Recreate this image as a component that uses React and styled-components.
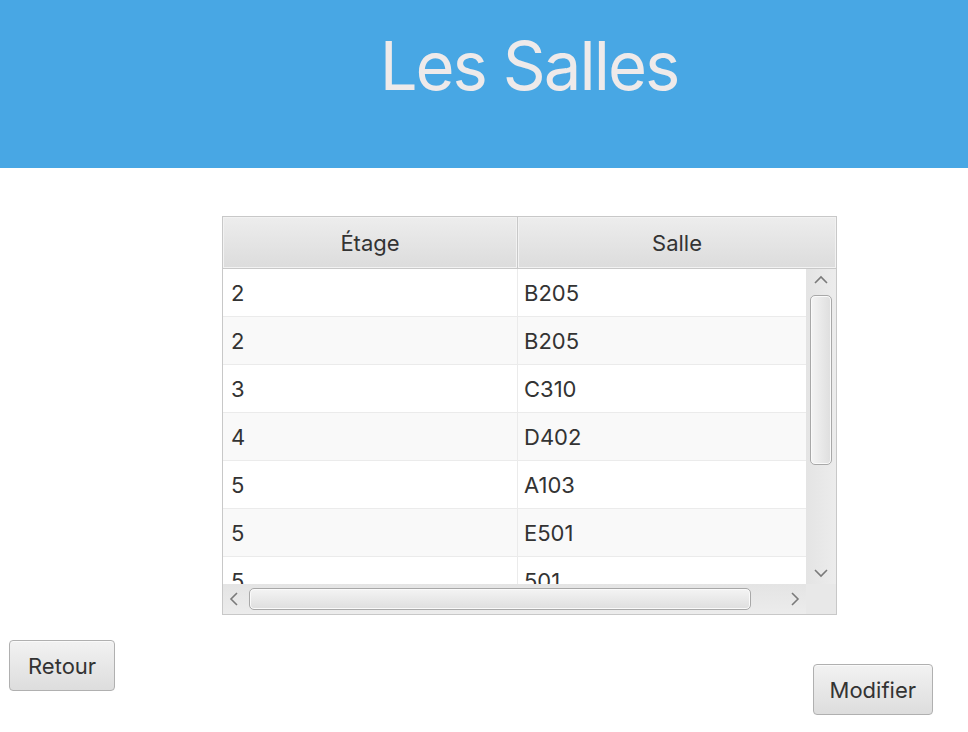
import React from 'react';
import styled, { createGlobalStyle } from 'styled-components';

const rooms = [
  ['2', 'B205'],
  ['2', 'B205'],
  ['3', 'C310'],
  ['4', 'D402'],
  ['5', 'A103'],
  ['5', 'E501'],
  ['5', '501'],
];

export default function App() {
  return (
    <>
      <GlobalStyle />
      <Page>
        <Banner>
          <Title>Les Salles</Title>
        </Banner>
        <Content>
          <Table>
            <HeadRow>
              <HeadCell>Étage</HeadCell>
              <HeadCell $last>Salle</HeadCell>
            </HeadRow>
            <BodyArea>
              <Rows>
                {rooms.map(([floor, room], i) => (
                  <Row key={i} $odd={i % 2 === 1}>
                    <Cell>{floor}</Cell>
                    <Cell $last>{room}</Cell>
                  </Row>
                ))}
              </Rows>
              <VScroll>
                <Arrow viewBox="0 0 16 10">
                  <polyline points="2,8 8,2 14,8" />
                </Arrow>
                <VTrack>
                  <VThumb />
                </VTrack>
                <Arrow viewBox="0 0 16 10">
                  <polyline points="2,2 8,8 14,2" />
                </Arrow>
              </VScroll>
              <HScroll>
                <Arrow viewBox="0 0 10 16" $h>
                  <polyline points="8,2 2,8 8,14" />
                </Arrow>
                <HTrack>
                  <HThumb />
                </HTrack>
                <Arrow viewBox="0 0 10 16" $h>
                  <polyline points="2,2 8,8 2,14" />
                </Arrow>
              </HScroll>
              <Corner />
            </BodyArea>
          </Table>
          <Actions>
            <Button>Retour</Button>
            <Button $low>Modifier</Button>
          </Actions>
        </Content>
      </Page>
    </>
  );
}

const GlobalStyle = createGlobalStyle`
  body {
    margin: 0;
    background: #ffffff;
    font-family: Inter, "Liberation Sans", sans-serif;
    color: #333333;
  }
`;

const Page = styled.div`
  width: 968px;
  height: 732px;
  display: flex;
  flex-direction: column;
`;

const Banner = styled.header`
  height: 168px;
  background: #48a7e4;
  display: flex;
  justify-content: center;
  padding-left: 90px;
  box-sizing: border-box;
`;

const Title = styled.h1`
  margin: 16px 0 0;
  font-size: 67px;
  font-weight: 400;
  letter-spacing: -2px;
  color: #eeeaea;
  line-height: 100px;
`;

const Content = styled.main`
  display: flex;
  flex-direction: column;
  padding-top: 48px;
`;

const Table = styled.div`
  align-self: flex-start;
  margin-left: 222px;
  width: 615px;
  border: 1px solid #c8c8c8;
  box-sizing: border-box;
  display: flex;
  flex-direction: column;
`;

const HeadRow = styled.div`
  display: grid;
  grid-template-columns: 295px 1fr;
  height: 52px;
  border-bottom: 1px solid #c8c8c8;
  box-sizing: border-box;
`;

const HeadCell = styled.div`
  display: flex;
  align-items: center;
  justify-content: center;
  font-size: 22px;
  color: #333;
  background: linear-gradient(#ededed, #dcdcdc);
  box-shadow: inset 0 0 0 1px #f2f2f2;
  border-right: ${p => (p.$last ? 'none' : '1px solid #c8c8c8')};
`;

const BodyArea = styled.div`
  display: grid;
  grid-template-columns: 583px 30px;
  grid-template-rows: 315px 30px;
`;

const Rows = styled.div`
  overflow: hidden;
`;

const Row = styled.div`
  display: grid;
  grid-template-columns: 295px 1fr;
  height: 48px;
  background: ${p => (p.$odd ? '#f9f9f9' : '#ffffff')};
  border-bottom: 1px solid #ebebeb;
  box-sizing: border-box;
`;

const Cell = styled.div`
  display: flex;
  align-items: center;
  padding-left: ${p => (p.$last ? '6px' : '8px')};
  font-size: 22px;
  color: #333;
  border-right: ${p => (p.$last ? 'none' : '1px solid #ebebeb')};
`;

const VScroll = styled.div`
  background: linear-gradient(90deg, #e4e4e4, #ececec);
  display: flex;
  flex-direction: column;
  align-items: center;
  padding: 6px 0;
  box-sizing: border-box;
`;

const HScroll = styled.div`
  background: linear-gradient(#e4e4e4, #ececec);
  display: flex;
  align-items: center;
  padding: 0 6px;
  box-sizing: border-box;
`;

const Corner = styled.div`
  background: #e8e8e8;
`;

const Arrow = styled.svg`
  width: ${p => (p.$h ? '10px' : '16px')};
  height: ${p => (p.$h ? '16px' : '10px')};
  flex-shrink: 0;
  fill: none;
  stroke: #7a7a7a;
  stroke-width: 1.6;
`;

const VTrack = styled.div`
  flex: 1;
  width: 100%;
  padding: 10px 4px;
  box-sizing: border-box;
`;

const VThumb = styled.div`
  height: 168px;
  border: 1px solid #a8a8a8;
  border-radius: 5px;
  background: linear-gradient(90deg, #f4f4f4, #dedede);
  box-shadow: inset 0 0 0 1px #fafafa;
`;

const HTrack = styled.div`
  flex: 1;
  padding: 0 8px 0 10px;
`;

const HThumb = styled.div`
  width: 502px;
  height: 22px;
  border: 1px solid #a8a8a8;
  border-radius: 5px;
  background: linear-gradient(#f4f4f4, #dedede);
  box-shadow: inset 0 0 0 1px #fafafa;
  box-sizing: border-box;
`;

const Actions = styled.div`
  display: flex;
  justify-content: space-between;
  align-items: flex-start;
  padding: 25px 35px 0 9px;
`;

const Button = styled.button`
  margin-top: ${p => (p.$low ? '24px' : '0')};
  height: 51px;
  padding: ${p => (p.$low ? '0 16px' : '0 18px')};
  font-family: Inter, "Liberation Sans", sans-serif;
  font-size: 22px;
  color: #333;
  border: 1px solid #b0b0b0;
  border-radius: 4px;
  background: linear-gradient(#f2f2f2, #dddddd);
  box-shadow: inset 0 1px 0 #fafafa;
`;
